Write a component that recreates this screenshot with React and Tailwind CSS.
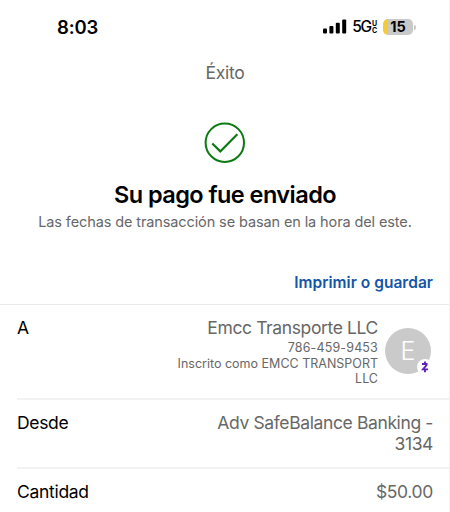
import React from "react";

function StatusBar() {
  return (
    <div className="flex h-[54px] items-start justify-between pl-[57px] pr-[33px]">
      <span className="mt-[15px] text-[18.5px] leading-6 font-semibold tracking-[-0.15px] text-black">8:03</span>
      <div className="mt-[15px] flex h-6 items-center">
        {/* Señal */}
        <svg className="h-4 w-6" viewBox="0 0 24 16" fill="#000">
          <rect x="0" y="9.6" width="4" height="5" rx="1" />
          <rect x="6.4" y="7" width="4" height="7.6" rx="1" />
          <rect x="12.8" y="3.8" width="4" height="10.8" rx="1" />
          <rect x="19.2" y="0.4" width="4" height="14.2" rx="1" />
        </svg>
        <span className="ml-[5px] text-[15.5px] leading-6 font-medium tracking-[-1.2px] text-black">5G</span>
        <span className="ml-[1px] flex w-[6px] flex-col text-[7px] leading-[7px] font-bold text-black">
          <span className="h-[7px] overflow-hidden">U</span>
          <span className="h-[7px] overflow-hidden">C</span>
        </span>
        {/* Batería */}
        <div className="ml-[5px] flex h-4 w-[30px] items-center justify-center overflow-hidden rounded-[5px] bg-[linear-gradient(to_right,#f3cb38_5px,#c9c9c9_5px)]">
          <span className="text-[14.5px] leading-4 font-bold text-black">15</span>
        </div>
        <div className="ml-[1px] h-[5px] w-[2px] rounded-r-full bg-[#c9c9c9]" />
      </div>
    </div>
  );
}

function Avatar() {
  return (
    <div className="relative mt-[23px] ml-[7px] flex h-[46px] w-[46px] items-center justify-center rounded-full bg-[#cacaca]">
      <span className="text-[25px] leading-none font-light text-white">E</span>
      <svg className="absolute -right-[2px] -bottom-[1px] h-4 w-4" viewBox="0 0 16 16">
        <circle cx="8" cy="8" r="8" fill="#fff" />
        <path d="M5 5h4.6v1L6 10.4h5M8 2.4v2.6M8 10.4v2.8" fill="none" stroke="#6422b5" strokeWidth="1.9" />
      </svg>
    </div>
  );
}

export default function App() {
  return (
    <div className="flex h-[512px] w-[450px] flex-col overflow-hidden border-r border-[#f2f2f2] bg-white font-[Inter,sans-serif] text-[#676767]">
      <StatusBar />

      {/* Confirmación */}
      <header className="flex w-[450px] flex-col items-center">
        <h1 className="mt-[7px] text-[17.5px] leading-6 tracking-[-0.3px]">Éxito</h1>
        <svg className="mt-[37px] h-[42px] w-[42px]" viewBox="0 0 42 42" fill="none" stroke="#0b7a12" strokeWidth="2">
          <circle cx="20.8" cy="20.7" r="19.2" />
          <path d="M8.3 21.5L16.3 29.4L33.3 12.2" strokeWidth="2.2" />
        </svg>
        <h2 className="mt-[15px] text-[23.5px] leading-8 font-semibold tracking-[-0.55px] whitespace-nowrap text-black">Su pago fue enviado</h2>
        <p className="mt-[1px] text-[14.5px] leading-5 tracking-[-0.11px] whitespace-nowrap">Las fechas de transacción se basan en la hora del este.</p>
      </header>

      <div className="mt-[41px] flex h-[31px] justify-end pr-[16px]">
        <a className="text-[15.5px] leading-5 font-semibold tracking-[0.03px] whitespace-nowrap text-[#1555a8]">Imprimir o guardar</a>
      </div>

      {/* Detalles del pago */}
      <section className="border-t-[1.5px] border-[#eaeaea] pl-[17px] text-[17.5px]">
        <div className="flex h-[93px] justify-between pr-[18px]">
          <span className="mt-[11px] leading-6 text-black">A</span>
          <div className="flex">
            <div className="mt-[11px] flex flex-col items-end text-[12.5px] leading-[15px] whitespace-nowrap">
              <span className="text-[17.5px] leading-6 tracking-[-0.38px]">Emcc Transporte LLC</span>
              <span className="leading-[15px] tracking-[0.15px]">786-459-9453</span>
              <span className="mt-[1px]">Inscrito como EMCC TRANSPORT</span>
              <span>LLC</span>
            </div>
            <Avatar />
          </div>
        </div>
        <div className="flex h-[69px] justify-between border-t-2 border-[#f2f2f2] pr-[16px]">
          <span className="mt-[11px] leading-6 tracking-[-0.35px] text-black">Desde</span>
          <div className="mt-[12px] text-right leading-[21px] tracking-[-0.38px] whitespace-nowrap">
            <div>Adv SafeBalance Banking -</div>
            <div>3134</div>
          </div>
        </div>
        <div className="flex justify-between border-t-2 border-[#f2f2f2] pr-[16px]">
          <span className="mt-[11px] leading-6 tracking-[-0.3px] text-black">Cantidad</span>
          <span className="mt-[11px] leading-6 tracking-[-0.35px]">$50.00</span>
        </div>
      </section>
    </div>
  );
}
